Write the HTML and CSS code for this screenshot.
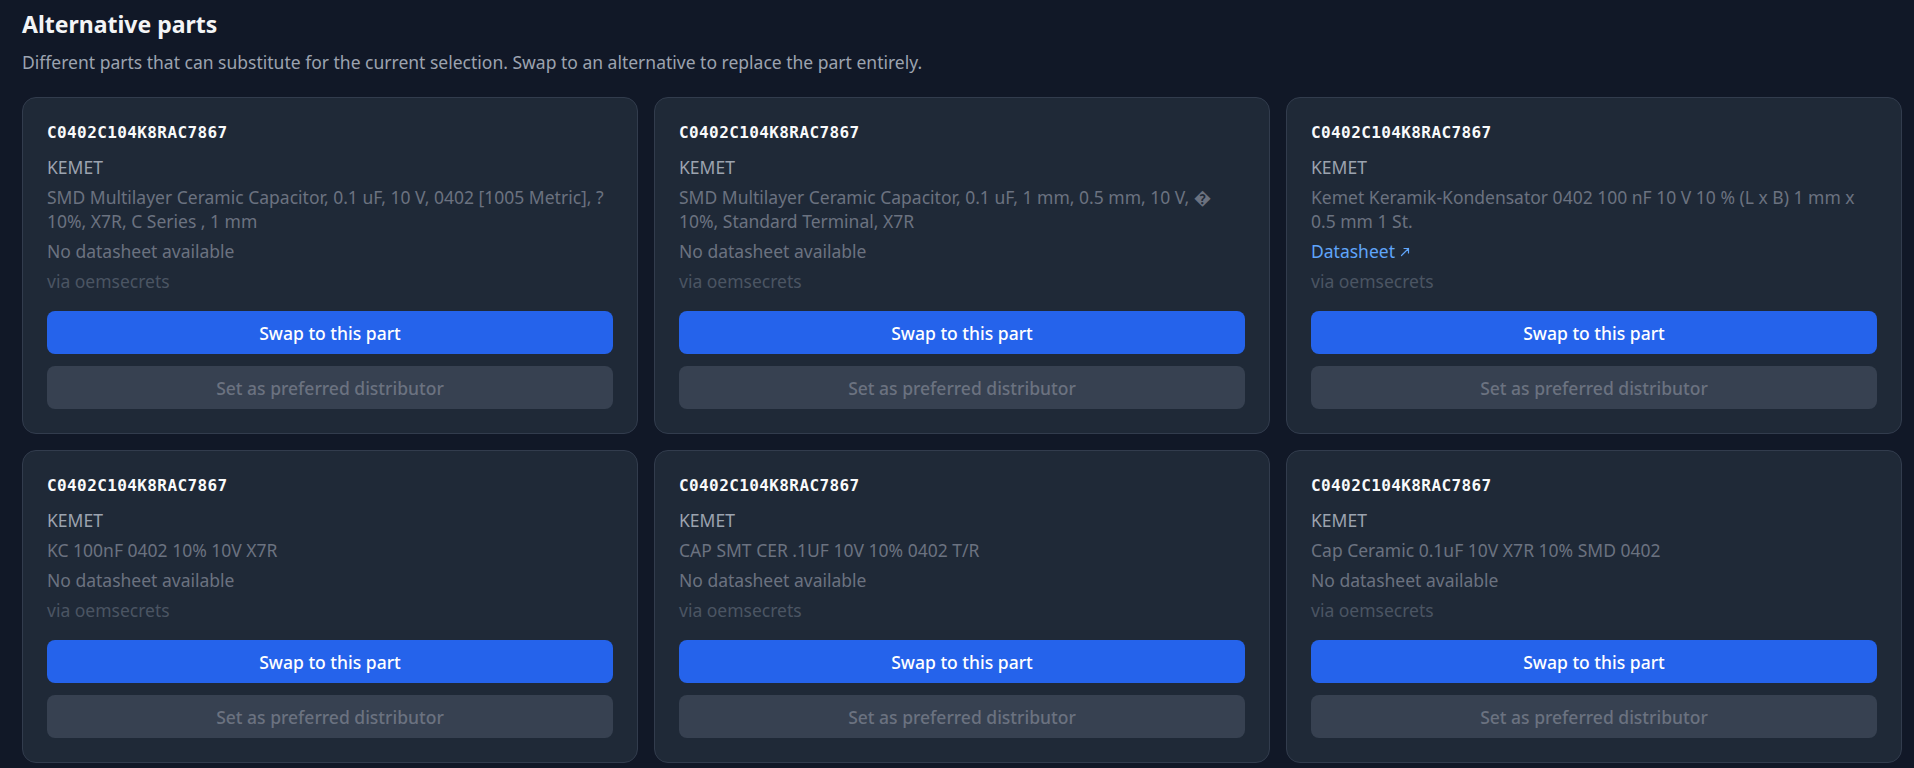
FILE: index.html
```html
<!DOCTYPE html>
<html lang="en">
<head>
<meta charset="utf-8">
<title>Alternative parts</title>
<link rel="stylesheet" href="styles.css">
</head>
<body>
<main class="page">
  <header class="intro">
    <h2 class="title">Alternative parts</h2>
    <p class="lead">Different parts that can substitute for the current selection. Swap to an alternative to replace the part entirely.</p>
  </header>
  <section class="grid">
    <article class="card">
      <div class="part">C0402C104K8RAC7867</div>
      <div class="info">
        <div class="mfr">KEMET</div>
        <div class="desc">SMD Multilayer Ceramic Capacitor, 0.1 uF, 10 V, 0402 [1005 Metric], ? 10%, X7R, C Series , 1 mm</div>
        <div class="nods">No datasheet available</div>
        <div class="src">via oemsecrets</div>
      </div>
      <div class="actions">
        <button class="btn primary" type="button">Swap to this part</button>
        <button class="btn muted" type="button" disabled>Set as preferred distributor</button>
      </div>
    </article>
    <article class="card">
      <div class="part">C0402C104K8RAC7867</div>
      <div class="info">
        <div class="mfr">KEMET</div>
        <div class="desc">SMD Multilayer Ceramic Capacitor, 0.1 uF, 1 mm, 0.5 mm, 10 V, &#xFFFD; 10%, Standard Terminal, X7R</div>
        <div class="nods">No datasheet available</div>
        <div class="src">via oemsecrets</div>
      </div>
      <div class="actions">
        <button class="btn primary" type="button">Swap to this part</button>
        <button class="btn muted" type="button" disabled>Set as preferred distributor</button>
      </div>
    </article>
    <article class="card">
      <div class="part">C0402C104K8RAC7867</div>
      <div class="info">
        <div class="mfr">KEMET</div>
        <div class="desc">Kemet Keramik-Kondensator 0402 100 nF 10 V 10 % (L x B) 1 mm x 0.5 mm 1 St.</div>
        <a class="sheet" href="#">Datasheet <svg class="ext" viewBox="0 0 10 10" width="10" height="10" aria-hidden="true"><path d="M1.5 8.5 L8.5 1.5 M4 1.5 H8.5 V6" fill="none" stroke="currentColor" stroke-width="1.2" stroke-linecap="round" stroke-linejoin="round"/></svg></a>
        <div class="src">via oemsecrets</div>
      </div>
      <div class="actions">
        <button class="btn primary" type="button">Swap to this part</button>
        <button class="btn muted" type="button" disabled>Set as preferred distributor</button>
      </div>
    </article>
    <article class="card">
      <div class="part">C0402C104K8RAC7867</div>
      <div class="info">
        <div class="mfr">KEMET</div>
        <div class="desc">KC 100nF 0402 10% 10V X7R</div>
        <div class="nods">No datasheet available</div>
        <div class="src">via oemsecrets</div>
      </div>
      <div class="actions">
        <button class="btn primary" type="button">Swap to this part</button>
        <button class="btn muted" type="button" disabled>Set as preferred distributor</button>
      </div>
    </article>
    <article class="card">
      <div class="part">C0402C104K8RAC7867</div>
      <div class="info">
        <div class="mfr">KEMET</div>
        <div class="desc">CAP SMT CER .1UF 10V 10% 0402 T/R</div>
        <div class="nods">No datasheet available</div>
        <div class="src">via oemsecrets</div>
      </div>
      <div class="actions">
        <button class="btn primary" type="button">Swap to this part</button>
        <button class="btn muted" type="button" disabled>Set as preferred distributor</button>
      </div>
    </article>
    <article class="card">
      <div class="part">C0402C104K8RAC7867</div>
      <div class="info">
        <div class="mfr">KEMET</div>
        <div class="desc">Cap Ceramic 0.1uF 10V X7R 10% SMD 0402</div>
        <div class="nods">No datasheet available</div>
        <div class="src">via oemsecrets</div>
      </div>
      <div class="actions">
        <button class="btn primary" type="button">Swap to this part</button>
        <button class="btn muted" type="button" disabled>Set as preferred distributor</button>
      </div>
    </article>
  </section>
</main>
</body>
</html>
```
FILE: styles.css
```css
* { box-sizing: border-box; }

html, body {
  margin: 0;
  background: #111827;
}

body {
  font-family: "Noto Sans", "DejaVu Sans", sans-serif;
  font-size: 17.5px;
  line-height: 24px;
  color: #9ca3af;
}

.page {
  padding: 10px 12px 0 22px;
}

.title {
  margin: 0;
  font-size: 23px;
  line-height: 28px;
  font-weight: 700;
  color: #f3f4f6;
}

.lead {
  margin: 12px 0 0;
  color: #9ca3af;
}

.grid {
  margin-top: 23px;
  display: grid;
  grid-template-columns: repeat(3, 1fr);
  gap: 16px;
}

.card {
  display: flex;
  flex-direction: column;
  padding: 24px;
  background: #1f2937;
  border: 1px solid #323c4d;
  border-radius: 14px;
}

.part {
  font-family: "DejaVu Sans Mono", monospace;
  font-weight: 700;
  font-size: 16px;
  line-height: 22px;
  letter-spacing: 0.4px;
  color: #f9fafb;
  margin-bottom: 11px;
}

.info {
  display: flex;
  flex-direction: column;
  gap: 6px;
}

.mfr { color: #9ca3af; }
.desc { color: #6b7280; }
.nods { color: #6b7280; }
.src { color: #4b5563; }

.sheet {
  color: #60a5fa;
  text-decoration: none;
  display: inline-flex;
  align-items: center;
  gap: 5px;
  align-self: flex-start;
}

.ext { margin-top: 1px; }

.actions {
  margin-top: auto;
  padding-top: 18px;
  display: flex;
  flex-direction: column;
  gap: 12px;
}

.btn {
  height: 43px;
  border: 0;
  border-radius: 8px;
  font-family: inherit;
  font-size: 17.5px;
  font-weight: 500;
  cursor: pointer;
}

.primary {
  background: #2563eb;
  color: #ffffff;
}

.muted {
  background: #374151;
  color: #6b7280;
  cursor: not-allowed;
}
```
